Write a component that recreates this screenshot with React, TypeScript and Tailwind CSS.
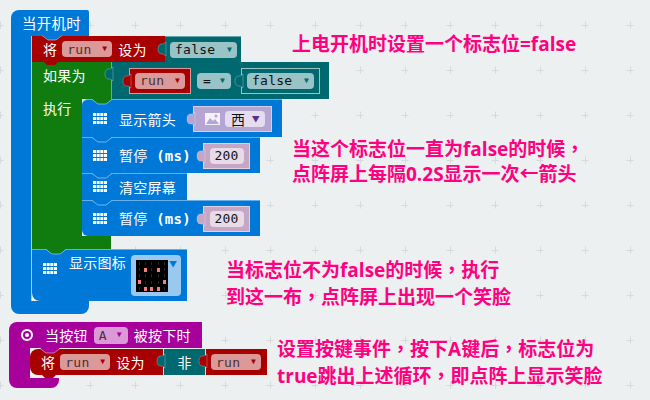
import type { ReactNode } from 'react';

const smile = [
  0, 0, 0, 0, 0,
  0, 1, 0, 1, 0,
  0, 0, 0, 0, 0,
  1, 0, 0, 0, 1,
  0, 1, 1, 1, 0,
];

function Knob({ fill, x = '-left-[8px]' }: { fill: string; x?: string }) {
  return (
    <svg width="9" height="16" viewBox="0 0 9 16" className={`absolute top-[4px] overflow-visible ${x} ${fill}`}>
      <path d="M9 1C8 1 8 3 5 3 2 3 1 5 1 8 1 11 2 13 5 13 8 13 8 15 9 15Z" stroke="#ffffff" strokeOpacity="0.25" />
    </svg>
  );
}

// little chevron a statement block takes from the one above it
function Notch({ fill, left = 'left-[10px]' }: { fill: string; left?: string }) {
  return (
    <svg width="20" height="6" viewBox="0 0 20 6" className={`absolute -top-px ${left} ${fill}`}>
      <path d="M0 0L6 5H14L20 0Z" />
      <path d="M0 0.500L6 5H14L20 0.500" fill="none" stroke="#ffffff" strokeOpacity="0.45" />
    </svg>
  );
}

function Pill({ label, bg, arrow, w, dark }: { label: string; bg: string; arrow: string; w: string; dark?: boolean }) {
  return (
    <div className={`flex h-[16px] items-center justify-between rounded-[4px] pl-[5px] pr-[5px] font-['DejaVu_Sans_Mono'] text-[13px] ${bg} ${w} ${dark ? 'text-[#111]' : 'text-[#433]'}`}>
      <span>{label}</span>
      <span className={`text-[8px] leading-none ${arrow}`}>▼</span>
    </div>
  );
}

function RunPill({ w = 'w-[50px]' }: { w?: string }) {
  return <Pill label="run" bg="bg-[#dc9999]" arrow="text-[#a80000]" w={w} />;
}

function FalsePill({ w }: { w: string }) {
  return <Pill label="false" bg="bg-[#99c3c6]" arrow="text-[#006970]" w={w} dark />;
}

function GridIcon() {
  return (
    <svg width="14" height="12" viewBox="0 0 14 12" className="fill-white shrink-0">
      {[0, 4, 8].map((y) =>
        [0, 3.670, 7.330, 11].map((x) => <rect key={`${x}-${y}`} x={x} y={y} width="3" height="3" />),
      )}
    </svg>
  );
}

function Statement({ children, h, w, notch = 'fill-[#0078d7]', corner = '' }: { children: ReactNode; h: string; w: string; notch?: string; corner?: string }) {
  return (
    <div className={`relative flex items-center border-t border-[#66aee7] bg-[#0078d7] pl-[11px] ${h} ${w} ${corner}`}>
      <Notch fill={notch} />
      <GridIcon />
      {children}
    </div>
  );
}

function NumberSlot() {
  return (
    <div className="relative ml-auto mr-[10px] flex h-[26px] w-[47px] items-center justify-center border border-[#e0d2e0] bg-[#c5a6c5]">
      <Knob fill="fill-[#c5a6c5]" x="-left-[8px]" />
      <div className="flex h-[16px] w-[34px] items-center justify-center rounded-[4px] bg-[#e8dbe8] font-['DejaVu_Sans_Mono'] text-[13px] text-[#111]">200</div>
    </div>
  );
}

function PauseBlock({ corner }: { corner?: string }) {
  return (
    <Statement h="h-[36px]" w="w-[178px]" corner={corner}>
      <span className="ml-[12px] font-['DejaVu_Sans_Mono','Noto_Sans_CJK_SC',monospace] text-[14px] font-bold text-[#ffffff]">
        <span className="font-normal">暂停</span> (ms)
      </span>
      <NumberSlot />
    </Statement>
  );
}

function SetRow({ top, round }: { top: string; round?: boolean }) {
  return (
    <div className={`relative flex h-[26px] w-[133px] items-center bg-[#a80000] pl-[11px] text-white ${round ? 'rounded-l-[8px]' : ''}`}>
      <Notch fill={top} />
      <span>将</span>
      <div className="ml-[5px]">
        <RunPill />
      </div>
      <span className="ml-[6px]">设为</span>
      <svg width="18" height="6" viewBox="0 0 18 6" className="absolute -bottom-[4px] left-[10px] z-10 fill-[#a80000]">
        <path d="M0 0L5 5H13L18 0Z" />
      </svg>
    </div>
  );
}

function Led() {
  return (
    <div className="grid h-[32px] w-[32px] grid-cols-5 grid-rows-5 place-items-center bg-black">
      {smile.map((on, i) => (
        <span key={i} className={on ? 'h-[4px] w-[3px] bg-[#f08080]' : 'h-[3px] w-px bg-[#2a2a2a]'} />
      ))}
    </div>
  );
}

function StartupBlock() {
  return (
    <div className="absolute left-[11px] top-[10px] flex flex-col text-[14px] tracking-[0.25px] text-white">
      <div className="flex h-[26px] w-[78px] items-center rounded-tl-[8px] rounded-tr-[2px] bg-[#0078d7] pl-[11px] text-[14.500px]">当开机时</div>
      <div className="flex">
        <div className="w-[20px] bg-[#0078d7]" />
        <div className="flex flex-col border-l border-[#a6cff0]">
          {/* set run to false */}
          <div className="flex h-[26px]">
            <SetRow top="fill-[#0078d7]" />
            <div className="relative flex w-[76px] items-center border-t border-[#66a5a9] bg-[#006970] pl-[5px]">
              <Knob fill="fill-[#006970]" />
              <FalsePill w="w-[67px]" />
            </div>
          </div>
          {/* if */}
          <div className="flex h-[37px]">
            <div className="w-[79px] bg-[#107c10] pl-[11px] pt-[6px]">如果为</div>
            <div className="relative flex w-[218px] items-center border-l border-[#66a5a9] bg-[#006970] pl-[17px]">
              <Knob fill="fill-[#006970]" />
              <div className="relative flex h-[26px] w-[62px] items-center border border-[#dc9999] bg-[#a80000] pl-[5px]">
                <Knob fill="fill-[#a80000]" />
                <RunPill w="w-[50px]" />
              </div>
              <div className="ml-[6px] flex h-[16px] w-[34px] items-center justify-between rounded-[4px] bg-[#99c3c6] px-[6px] font-['DejaVu_Sans_Mono'] text-[13px] text-[#111]">
                <span>=</span>
                <span className="text-[8px] text-[#006970]">▼</span>
              </div>
              <div className="relative ml-[10px] flex h-[26px] w-[79px] items-center border border-[#99c3c6] bg-[#006970] pl-[5px]">
                <Knob fill="fill-[#006970]" />
                <FalsePill w="w-[67px]" />
              </div>
            </div>
          </div>
          <div className="flex">
            <div className="w-[50px] bg-[#107c10] pl-[11px] pt-[2px]">执行</div>
            <div className="flex flex-col">
              <Statement h="h-[38px]" w="w-[200px]" notch="fill-[#107c10]" corner="rounded-tl-[6px]">
                <span className="ml-[12px]">显示箭头</span>
                <div className="relative ml-auto mr-[10px] flex h-[26px] w-[79px] items-center border border-[#d8cfe6] bg-[#b4a5d3] pl-[11px]">
                  <Knob fill="fill-[#b4a5d3]" />
                  <svg width="15" height="12" viewBox="0 0 15 12" className="shrink-0">
                    <rect width="15" height="12" fill="#f5f1fa" />
                    <path d="M1 11L5 5L8 8L10 6L14 11Z" fill="#b4a5d3" />
                    <circle cx="11" cy="3" r="1.500" fill="#b4a5d3" />
                  </svg>
                  <div className="ml-[5px] flex h-[16px] w-[40px] items-center justify-between rounded-[4px] bg-[#e4dcef] pl-[6px] pr-[5px] text-[14px] text-[#111]">
                    <span>西</span>
                    <span className="text-[8px] text-[#5c2d91]">▼</span>
                  </div>
                </div>
              </Statement>
              <PauseBlock />
              <Statement h="h-[27px]" w="w-[105px]">
                <span className="ml-[12px]">清空屏幕</span>
              </Statement>
              <PauseBlock corner="rounded-bl-[6px]" />
            </div>
          </div>
          <div className="h-[13px] w-[79px] bg-[#107c10]" />
          {/* show icon */}
          <div className="relative flex h-[52px] w-[155px] items-start rounded-bl-[8px] border-t border-[#66aee7] bg-[#0078d7] pl-[11px]">
            <Notch fill="fill-[#107c10]" left="left-[14px]" />
            <div className="mt-[13px]">
              <GridIcon />
            </div>
            <span className="ml-[12px] mt-[5px]">显示图标</span>
            <div className="ml-[5px] mt-[5px] flex h-[41px] w-[50px] items-start rounded-[4px] bg-[#99c9f0] pl-[5px] pt-[5px]">
              <Led />
              <span className="ml-[1px] text-[8px] leading-none text-[#0078d7]">▼</span>
            </div>
          </div>
        </div>
      </div>
      <div className="h-[13px] w-[78px] rounded-b-[8px] bg-[#0078d7]" />
    </div>
  );
}

function ButtonBlock() {
  return (
    <div className="absolute left-[9px] top-[322px] flex flex-col text-[14px] tracking-[0.25px] text-white">
      <div className="flex h-[26px] w-[193px] items-center rounded-tl-[8px] bg-[#a8009b] pl-[12px]">
        <div className="flex h-[12px] w-[12px] items-center justify-center rounded-full border-2 border-white">
          <div className="h-[4px] w-[4px] rounded-full bg-white" />
        </div>
        <span className="ml-[12px]">当按钮</span>
        <div className="ml-[6px] flex h-[17px] w-[34px] items-center justify-between rounded-[4px] bg-[#dc99d7] pl-[5px] pr-[6px] font-['DejaVu_Sans_Mono'] text-[13px] text-[#433]">
          <span>A</span>
          <span className="text-[8px] text-[#a8009b]">▼</span>
        </div>
        <span className="ml-[6px]">被按下时</span>
      </div>
      <div className="flex">
        <div className="w-[21px] bg-[#a8009b]" />
        <div className="flex h-[30px] items-start pt-px">
          <SetRow top="fill-[#a8009b]" round />
          <div className="relative flex h-[26px] w-[43px] items-center justify-center border-x border-[#dcdcdc] bg-[#006970]">
            <Knob fill="fill-[#006970]" />
            非
          </div>
          <div className="relative flex h-[26px] w-[61px] items-center bg-[#a80000] pl-[5px]">
            <Knob fill="fill-[#a80000]" />
            <RunPill />
          </div>
        </div>
      </div>
      <div className="h-[10px] w-[50px] rounded-b-[8px] bg-[#a8009b]" />
    </div>
  );
}

function Note({ lines, at }: { lines: string[]; at: string }) {
  return (
    <div className={`absolute whitespace-nowrap font-['Open_Sans','Noto_Sans_CJK_SC',sans-serif] text-[19px] font-bold leading-[25px] text-[#ff0080] ${at}`}>
      {lines.map((line) => (
        <div key={line}>
          {line.split('，').map((part, i) => (
            <span key={i}>
              {i > 0 && <span className="font-['Noto_Sans_CJK_TC']">，</span>}
              {part}
            </span>
          ))}
        </div>
      ))}
    </div>
  );
}

export default function App() {
  return (
    <div className="relative h-[400px] w-[650px] overflow-hidden bg-[#ecf0f1] font-['Noto_Sans_CJK_SC','Liberation_Sans',sans-serif] leading-none">
      {/* workspace grid */}
      <svg width="650" height="400" className="absolute inset-0">
        <defs>
          <pattern id="plus" width="45" height="45" patternUnits="userSpaceOnUse" x="0" y="25">
            <path d="M0 0.500H3.500M41.500 0.500H45M0.500 0V3.500M0.500 41.500V45" stroke="#d5dbdd" fill="none" />
          </pattern>
        </defs>
        <rect width="650" height="400" fill="url(#plus)" />
      </svg>

      <StartupBlock />
      <ButtonBlock />

      <Note at="left-[292px] top-[32px]" lines={['上电开机时设置一个标志位=false']} />
      <Note at="left-[292px] top-[135px]" lines={['当这个标志位一直为false的时候，', '点阵屏上每隔0.2S显示一次←箭头']} />
      <Note at="left-[226px] top-[256px]" lines={['当标志位不为false的时候，执行', '到这一布，点阵屏上出现一个笑脸']} />
      <Note at="left-[277px] top-[335px]" lines={['设置按键事件，按下A键后，标志位为', 'true跳出上述循环，即点阵上显示笑脸']} />
    </div>
  );
}
